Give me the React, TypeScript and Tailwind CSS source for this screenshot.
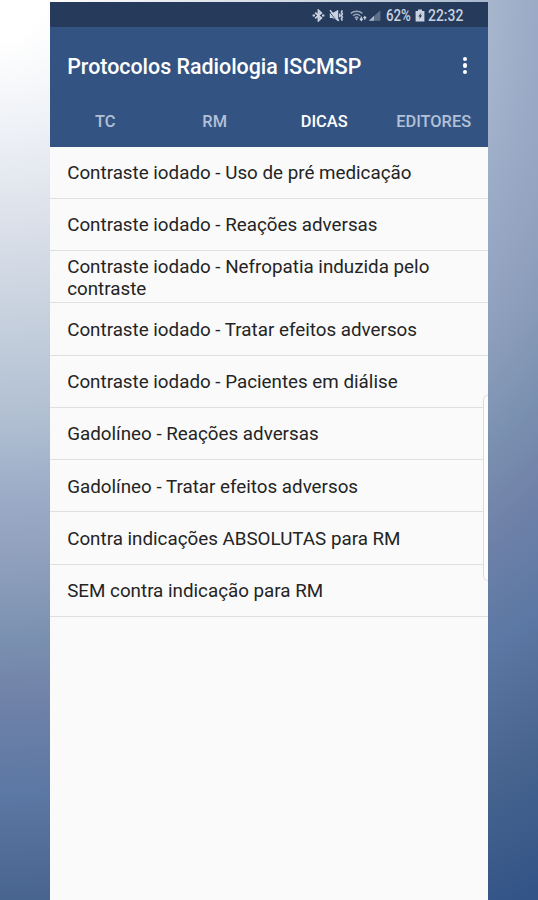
import React, { useState } from 'react';

const TABS = ['TC', 'RM', 'DICAS', 'EDITORES'];

const TIPS = [
  'Contraste iodado - Uso de pré medicação',
  'Contraste iodado - Reações adversas',
  'Contraste iodado - Nefropatia induzida pelo contraste',
  'Contraste iodado - Tratar efeitos adversos',
  'Contraste iodado - Pacientes em diálise',
  'Gadolíneo - Reações adversas',
  'Gadolíneo - Tratar efeitos adversos',
  'Contra indicações ABSOLUTAS para RM',
  'SEM contra indicação para RM',
];

const BluetoothIcon = () => (
  <svg className="w-[13px] h-[13px]" viewBox="0 0 13 13" fill="none" stroke="currentColor" strokeWidth="1.8">
    <path d="M3.2 3.6 9.3 9 6.5 11.6V1.4L9.3 4 3.2 9.4" />
    <path d="M.6 6.5h2.4M10 6.5h2.4" strokeWidth="2" />
  </svg>
);

const MutedIcon = () => (
  <svg className="w-[15px] h-[13px] ml-[4px]" viewBox="0 0 15 13" fill="currentColor">
    <path d="M.8 4h2.7L9.2.8v11.4L3.5 9H.8z" />
    <path d="M.2 2.6 8 12.2" stroke="#263b5c" strokeWidth=".8" />
    <path d="m1 1.2 8.8 10.6" stroke="currentColor" strokeWidth="1.5" />
    <path d="M10.8 4.6v3.6M13.4 1.4l-1 1.7 1 1.7-1 1.7 1 1.7-1 1.7 1 1.7" fill="none" stroke="currentColor" strokeWidth="1.5" />
  </svg>
);

const WifiIcon = () => (
  <svg className="w-[17px] h-[13px] ml-[6px]" viewBox="0 0 17 13" fill="none" stroke="currentColor" strokeWidth="1.5">
    <path d="M.8 4.4C4.2 1.4 9 1.4 12.4 4.4M3 6.8c2.1-1.8 5.1-1.8 7.2 0M4.8 8.8c1.2-.9 2.5-.9 3.6 0" opacity=".7" />
    <path d="m5.2 9.4 1.4 2 1.4-2z" fill="currentColor" stroke="none" />
    <path d="M11.3 7.4v4M9.9 9.6l1.4 1.8 1.4-1.8M14.8 10.8V7.6M13.5 9.2l1.3-1.6 1.3 1.6" strokeWidth="1.2" />
  </svg>
);

const SignalIcon = () => (
  <svg className="w-[13px] h-[13px] ml-px" viewBox="0 0 13 13" fill="currentColor">
    <path d="M12.4 1.2v10.6H.8z" opacity=".35" />
    <path d="M6 6.8v5H.8z" opacity=".7" />
  </svg>
);

const BatteryIcon = () => (
  <svg className="w-[10px] h-[13px] ml-[2px]" viewBox="0 0 10 13">
    <path d="M3 .5h4v1.4h2.4v10.6H.6V1.9H3z" fill="currentColor" />
    <path d="m6.4 3.8-3.2 3.6h1.7l-.6 2.6 2.9-3.5H5.6z" fill="#263b5c" />
  </svg>
);

const StatusBar = () => (
  <div className="flex items-center justify-end h-[25px] pt-[2px] pr-[24px] bg-[#263b5c] text-[#c9d2df]">
    <BluetoothIcon />
    <MutedIcon />
    <WifiIcon />
    <SignalIcon />
    <span className="ml-[5px] w-[27px] text-[16px] leading-none font-medium whitespace-nowrap">
      <span className="inline-block origin-left scale-x-[0.83]">62%</span>
    </span>
    <BatteryIcon />
    <span className="ml-[3px] w-[36px] text-[16px] leading-none font-medium whitespace-nowrap">
      <span className="inline-block origin-left scale-x-[0.87]">22:32</span>
    </span>
  </div>
);

const App: React.FC = () => {
  const [activeTab, setActiveTab] = useState('DICAS');

  return (
    <div
      className="w-[538px] h-[900px] pl-[50.4px] pr-[49.6px] pt-[2px] overflow-hidden bg-[radial-gradient(1070px_1000px_at_0_0,#ffffff_4%,#eef1f6_13%,#dce1ea_22%,#c2cddb_34%,#aebdd0_43%,#9dadc8_49%,#8fa0bd_56%,#7a90b0_64%,#7082a8_70%,#5c78a4_79%,#48658f_90%,#335487_102%)]"
      style={{ fontFamily: 'Roboto, "Liberation Sans", sans-serif' }}
    >
      <div className="relative flex flex-col h-full bg-[#fafafa]">
        <StatusBar />
        <header className="h-[119.5px] shrink-0 bg-[#335482] text-white">
          <div className="flex items-center justify-between h-[70px] pt-[9px] pl-[16.8px] pr-[21px]">
            <h1 className="text-[21.4px] leading-none font-medium whitespace-nowrap">Protocolos Radiologia ISCMSP</h1>
            <button className="flex flex-col gap-[2.2px] -mt-[2px]" aria-label="Menu">
              <span className="w-[4.5px] h-[4.5px] rounded-full bg-white" />
              <span className="w-[4.5px] h-[4.5px] rounded-full bg-white" />
              <span className="w-[4.5px] h-[4.5px] rounded-full bg-white" />
            </button>
          </div>
          <nav className="grid grid-cols-4 h-[49px] pt-px">
            {TABS.map(tab => (
              <button
                key={tab}
                onClick={() => setActiveTab(tab)}
                className={`text-[16.4px] font-medium ${tab === activeTab ? 'text-white' : 'text-[#b2c0d8]'}`}
              >
                {tab}
              </button>
            ))}
          </nav>
        </header>
        <ul>
          {TIPS.map(tip => (
            <li
              key={tip}
              className="flex items-center h-[52.25px] pt-[2px] pl-[16.8px] pr-[40px] border-b border-[#dfdfdf] text-[18.8px] leading-[22px] text-[#242424]"
            >
              {tip}
            </li>
          ))}
        </ul>
        {/* edge panel handle */}
        <div className="absolute right-0 top-[393px] w-[5px] h-[186px] rounded-l-[5px] border border-r-0 border-[#dcdcdc] bg-[#fdfdfd]" />
      </div>
    </div>
  );
};

export default App;
